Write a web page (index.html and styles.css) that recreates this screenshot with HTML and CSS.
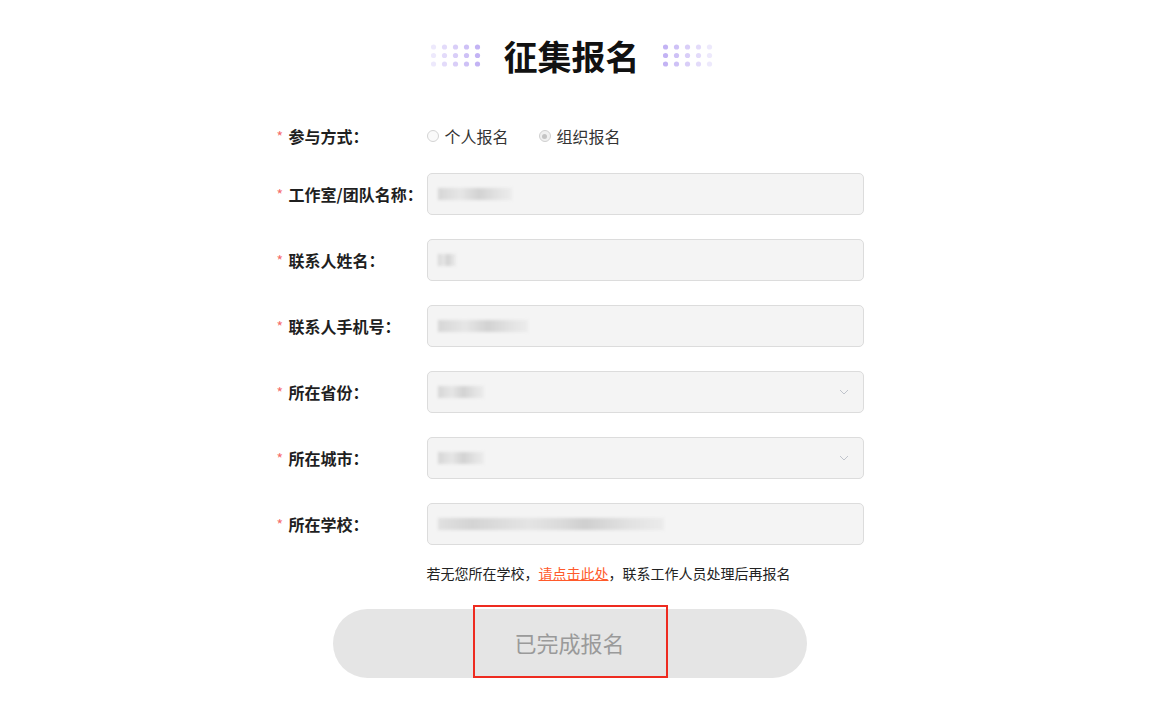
FILE: index.html
```html
<!DOCTYPE html>
<html lang="zh">
<head>
<meta charset="utf-8">
<title>征集报名</title>
<link rel="stylesheet" href="styles.css">
</head>
<body>
<main class="page">
  <header class="title-row">
    <svg class="dots" width="50" height="24" viewBox="0 0 50 24">
      <g fill="#b9a6f2">
        <circle cx="2.5" cy="3" r="2.6" opacity="0.25"/><circle cx="2.5" cy="11.5" r="2.6" opacity="0.25"/><circle cx="2.5" cy="20" r="2.6" opacity="0.25"/>
        <circle cx="13.5" cy="3" r="2.6" opacity="0.4"/><circle cx="13.5" cy="11.5" r="2.6" opacity="0.4"/><circle cx="13.5" cy="20" r="2.6" opacity="0.4"/>
        <circle cx="24.5" cy="3" r="2.6" opacity="0.55"/><circle cx="24.5" cy="11.5" r="2.6" opacity="0.55"/><circle cx="24.5" cy="20" r="2.6" opacity="0.55"/>
        <circle cx="35.5" cy="3" r="2.6" opacity="0.7"/><circle cx="35.5" cy="11.5" r="2.6" opacity="0.7"/><circle cx="35.5" cy="20" r="2.6" opacity="0.7"/>
        <circle cx="46.5" cy="3" r="2.6" opacity="0.85"/><circle cx="46.5" cy="11.5" r="2.6" opacity="0.85"/><circle cx="46.5" cy="20" r="2.6" opacity="0.85"/>
      </g>
    </svg>
    <h1 class="title">征集报名</h1>
    <svg class="dots" width="50" height="24" viewBox="0 0 50 24">
      <g fill="#b9a6f2">
        <circle cx="2.5" cy="3" r="2.6" opacity="0.85"/><circle cx="2.5" cy="11.5" r="2.6" opacity="0.85"/><circle cx="2.5" cy="20" r="2.6" opacity="0.85"/>
        <circle cx="13.5" cy="3" r="2.6" opacity="0.7"/><circle cx="13.5" cy="11.5" r="2.6" opacity="0.7"/><circle cx="13.5" cy="20" r="2.6" opacity="0.7"/>
        <circle cx="24.5" cy="3" r="2.6" opacity="0.55"/><circle cx="24.5" cy="11.5" r="2.6" opacity="0.55"/><circle cx="24.5" cy="20" r="2.6" opacity="0.55"/>
        <circle cx="35.5" cy="3" r="2.6" opacity="0.4"/><circle cx="35.5" cy="11.5" r="2.6" opacity="0.4"/><circle cx="35.5" cy="20" r="2.6" opacity="0.4"/>
        <circle cx="46.5" cy="3" r="2.6" opacity="0.25"/><circle cx="46.5" cy="11.5" r="2.6" opacity="0.25"/><circle cx="46.5" cy="20" r="2.6" opacity="0.25"/>
      </g>
    </svg>
  </header>

  <form class="form">
    <div class="row row-radio">
      <label class="label"><span class="star">*</span>参与方式：</label>
      <div class="radios">
        <span class="radio"><span class="dot"></span>个人报名</span>
        <span class="radio checked"><span class="dot"></span>组织报名</span>
      </div>
    </div>

    <div class="row">
      <label class="label"><span class="star">*</span>工作室/团队名称：</label>
      <div class="field"><span class="blur" style="width:74px"></span></div>
    </div>

    <div class="row">
      <label class="label"><span class="star">*</span>联系人姓名：</label>
      <div class="field"><span class="blur" style="width:18px"></span></div>
    </div>

    <div class="row">
      <label class="label"><span class="star">*</span>联系人手机号：</label>
      <div class="field"><span class="blur" style="width:90px"></span></div>
    </div>

    <div class="row">
      <label class="label"><span class="star">*</span>所在省份：</label>
      <div class="field select"><span class="blur" style="width:46px"></span>
        <svg class="chev" width="10" height="6" viewBox="0 0 10 6"><path d="M1 1 L5 5 L9 1" fill="none" stroke="#c0c4cc" stroke-width="1"/></svg>
      </div>
    </div>

    <div class="row">
      <label class="label"><span class="star">*</span>所在城市：</label>
      <div class="field select"><span class="blur" style="width:46px"></span>
        <svg class="chev" width="10" height="6" viewBox="0 0 10 6"><path d="M1 1 L5 5 L9 1" fill="none" stroke="#c0c4cc" stroke-width="1"/></svg>
      </div>
    </div>

    <div class="row">
      <label class="label"><span class="star">*</span>所在学校：</label>
      <div class="field"><span class="blur long" style="width:226px"></span></div>
    </div>

    <p class="hint">若无您所在学校，<a class="link" href="#">请点击此处</a>，联系工作人员处理后再报名</p>

    <div class="btn-wrap">
      <button type="button" class="submit">已完成报名</button>
      <span class="highlight"></span>
    </div>
  </form>
</main>
</body>
</html>
```

FILE: styles.css
```css
* { box-sizing: border-box; }
html, body { margin: 0; padding: 0; background: #fff; }
body {
  font-family: "Noto Sans CJK SC", "Noto Sans", sans-serif;
  color: #222;
}
.page {
  width: 1140px;
  padding-top: 36px;
  display: flex;
  flex-direction: column;
  align-items: center;
}
.title-row {
  display: flex;
  align-items: center;
  gap: 23px;
  height: 40px;
  padding-left: 3px;
}
.title {
  margin: 0;
  font-size: 34px;
  line-height: 40px;
  font-weight: 700;
  color: #111;
}
.dots { display: block; }

.form {
  width: 587px;
  margin-top: 48px;
  display: flex;
  flex-direction: column;
}
.row {
  display: flex;
  align-items: center;
  height: 42px;
  margin-bottom: 24px;
}
.row-radio { height: 24px; margin-top: 0; margin-bottom: 25px; }
.label {
  width: 150px;
  flex: none;
  font-size: 16px;
  font-weight: 700;
  color: #1f1f1f;
  white-space: nowrap;
  display: flex;
  align-items: center;
}
.star {
  color: #f56c6c;
  font-weight: 400;
  font-size: 14px;
  width: 12px;
  display: inline-block;
}
.radios {
  display: flex;
  gap: 30px;
}
.radio {
  display: flex;
  align-items: center;
  font-size: 16px;
  color: #333;
}
.radio .dot {
  width: 12px;
  height: 12px;
  border-radius: 50%;
  border: 1px solid #d4d4d4;
  background: #fafafa;
  margin-right: 6px;
  position: relative;
}
.radio.checked .dot {
  background: #f0f0f0;
  border-color: #d0d0d0;
}
.radio.checked .dot::after {
  content: "";
  position: absolute;
  left: 2.5px; top: 2.5px;
  width: 5px; height: 5px;
  border-radius: 50%;
  background: #c4c4c4;
}
.field {
  width: 437px;
  height: 42px;
  border: 1px solid #dcdcdc;
  border-radius: 5px;
  background: #f4f4f4;
  display: flex;
  align-items: center;
  padding: 0 10px;
}
.select { justify-content: space-between; padding-right: 14px; }
.chev { display: block; }
.blur {
  display: block;
  height: 12px;
  background: linear-gradient(90deg, #d6d6d6 0%, #e6e6e6 30%, #d2d2d2 55%, #e2e2e2 80%, #ececec 100%);
  filter: blur(1.5px);
}
.blur.long {
  background: linear-gradient(90deg, #e0e0e0 0%, #d4d4d4 15%, #e4e4e4 40%, #dadada 55%, #cfcfcf 65%, #e2e2e2 85%, #ebebeb 100%);
}

.hint {
  margin: -5px 0 0 150px;
  font-size: 14px;
  line-height: 18px;
  color: #222;
}
.link {
  color: #ff5a2b;
  text-decoration: underline;
}
.btn-wrap {
  position: relative;
  width: 474px;
  margin: 27px 0 0 56px;
}
.submit {
  display: block;
  width: 474px;
  height: 69px;
  border: none;
  border-radius: 35px;
  background: #e5e5e5;
  color: #9a9a9a;
  font-family: inherit;
  font-size: 22px;
  padding: 0 0 3px;
}
.highlight {
  position: absolute;
  left: 140px;
  top: -4px;
  width: 195px;
  height: 73px;
  border: 2px solid #ee2b20;
  pointer-events: none;
}
```
